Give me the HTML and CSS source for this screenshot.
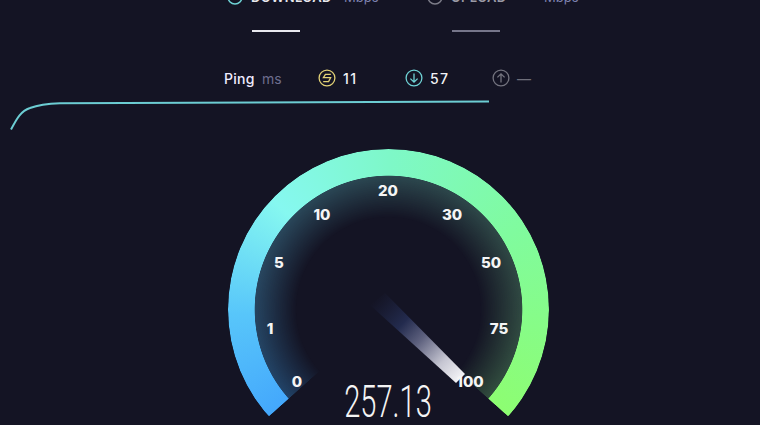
FILE: index.html
```html
<!DOCTYPE html>
<html lang="en">
<head>
<meta charset="utf-8">
<title>Speed test</title>
<link rel="stylesheet" href="styles.css">
</head>
<body>
<main class="page">
  <section class="heads">
    <div class="head head-down">
      <div class="head-label">
        <svg class="head-icon" viewBox="0 0 16 16"><circle cx="8" cy="8" r="7" fill="none" stroke="#6fd3d6" stroke-width="1.5"/></svg>
        <span class="head-name">DOWNLOAD</span><span class="head-unit">Mbps</span>
      </div>
      <div class="head-bar bar-on"></div>
    </div>
    <div class="head head-up">
      <div class="head-label">
        <svg class="head-icon" viewBox="0 0 16 16"><circle cx="8" cy="8" r="7" fill="none" stroke="#7c7c88" stroke-width="1.5"/></svg>
        <span class="head-name dim">UPLOAD</span><span class="head-unit">Mbps</span>
      </div>
      <div class="head-bar bar-off"></div>
    </div>
  </section>

  <section class="ping">
    <span class="ping-name">Ping</span><span class="ping-unit">ms</span>
    <svg class="ping-icon first" viewBox="0 0 18 18"><circle cx="9" cy="9" r="7.900" fill="none" stroke="#e3d276" stroke-width="1.300"/><path d="M12.800 5.400H7.400L5.400 8.700H12.600L10.600 12.600H5.200" fill="none" stroke="#e3d276" stroke-width="1.300"/></svg>
    <span class="ping-val">11</span>
    <svg class="ping-icon second" viewBox="0 0 18 18"><circle cx="9" cy="9" r="7.900" fill="none" stroke="#6fd3d6" stroke-width="1.300"/><path d="M9 4.400V13.200M5.400 9.600L9 13.200L12.600 9.600" fill="none" stroke="#6fd3d6" stroke-width="1.300"/></svg>
    <span class="ping-val">57</span>
    <svg class="ping-icon third" viewBox="0 0 18 18"><circle cx="9" cy="9" r="7.900" fill="none" stroke="#74747f" stroke-width="1.300"/><path d="M9 13.600V4.800M5.400 8.400L9 4.800L12.600 8.400" fill="none" stroke="#74747f" stroke-width="1.300"/></svg>
    <span class="ping-dash">—</span>
  </section>

  <svg class="graph" viewBox="0 0 490 32"><path d="M11 29.500C17 18 21 11 30 8C38 5 45 3.800 60 3.200C120 2.200 300 1.800 489 1.500" fill="none" stroke="#6ccdd3" stroke-width="2"/></svg>

  <section class="gauge">
    <div class="glow"></div>
    <div class="arc"></div>
    <svg class="needle" viewBox="365 285 120 110">
      <defs><linearGradient id="ng" gradientUnits="userSpaceOnUse" x1="376" y1="298" x2="466" y2="382">
        <stop offset="0" stop-color="#1e2545" stop-opacity="0"/>
        <stop offset=".3" stop-color="#232b4e"/>
        <stop offset=".5" stop-color="#5f627f"/>
        <stop offset=".75" stop-color="#c6c6d2"/>
        <stop offset="1" stop-color="#ffffff"/>
      </linearGradient></defs>
      <path d="M385 293L465 374L456 383L370 305Z" fill="url(#ng)"/>
    </svg>
    <span class="tick t0">0</span>
    <span class="tick t1">1</span>
    <span class="tick t5">5</span>
    <span class="tick t10">10</span>
    <span class="tick t20">20</span>
    <span class="tick t30">30</span>
    <span class="tick t50">50</span>
    <span class="tick t75">75</span>
    <span class="tick t100">100</span>
    <span class="speed">257.13</span>
  </section>
</main>
</body>
</html>
```
FILE: styles.css
```css
html, body { margin: 0; padding: 0; }
body {
  background: #141424;
  width: 760px;
  height: 425px;
  overflow: hidden;
  font-family: Inter, "Noto Sans", sans-serif;
  color: #fff;
}
.page { display: flex; flex-direction: column; height: 425px; overflow: hidden; }

.heads { display: flex; margin-top: -11px; padding-left: 227px; gap: 0; }
.head { width: 200px; display: flex; flex-direction: column; }
.head-label { display: flex; align-items: center; height: 16px; white-space: nowrap; }
.head-icon { width: 16px; height: 16px; flex: none; margin-right: 8px; }
.head-name { font-size: 13px; font-weight: 600; letter-spacing: .4px; color: #e8e8ee; width: 93px; }
.head-name.dim { color: #9a9aa5; }
.head-unit { font-size: 13px; color: #7f82b0; }
.head-bar { width: 48px; height: 2px; margin: 25px 0 0 25px; }
.bar-on { background: #e8e8ee; }
.bar-off { background: #76768a; }

.ping { display: flex; align-items: center; height: 18px; margin-top: 37px; padding-left: 224px; }
.ping-name { font-size: 14px; font-weight: 500; letter-spacing: .3px; color: #f0ecff; width: 38px; }
.ping-unit { font-size: 14px; color: #6d6d8d; width: 21px; }
.ping-icon { width: 18px; height: 18px; flex: none; }
.ping-icon.first { margin-left: 35px; }
.ping-icon.second { margin-left: 42px; }
.ping-icon.third { margin-left: 42px; }
.ping-val { font-size: 14px; font-weight: 500; color: #f2f2f6; margin-left: 7px; width: 20px; letter-spacing: 1.400px; }
.ping-dash { font-size: 14px; color: #6f6f7a; margin-left: 7px; }

.graph { display: block; flex: none; width: 490px; height: 32px; margin-top: 13px; }

.gauge { position: relative; flex: none; width: 321px; height: 276px; margin: 16.500px 0 0 227.500px; }
.arc, .glow { position: absolute; left: 0; top: 0; width: 321px; height: 321px; border-radius: 50%; }
.arc {
  background: conic-gradient(from 228.400deg,
    #44a8fc 0deg, #58c6fa 40deg, #86f8f0 85deg, #7ef8c8 132deg, #80fb9e 190deg, #8dfd72 263.200deg,
    transparent 263.500deg, transparent 359.700deg, #44a8fc 360deg);
  -webkit-mask-image: radial-gradient(circle, transparent 133.500px, #000 134.200px);
  mask-image: radial-gradient(circle, transparent 133.500px, #000 134.200px);
}
.glow {
  background: conic-gradient(from 228.400deg,
    #22456b 0deg, #2a4a63 60deg, #2d4a52 132deg, #314b46 200deg, #33503f 263.200deg,
    transparent 263.500deg, transparent 359.700deg, #22456b 360deg);
  -webkit-mask-image: radial-gradient(circle, transparent 92px, #000 136px);
  mask-image: radial-gradient(circle, transparent 92px, #000 136px);
}
.needle { position: absolute; left: 137.500px; top: 136.500px; width: 120px; height: 110px; }
.tick { position: absolute; transform: translate(-50%, -50%); font-size: 15px; font-weight: 800; line-height: 1; color: #f5f5f5; }
.t0 { left: 69.500px; top: 232.500px; }
.t1 { left: 42.500px; top: 179.500px; }
.t5 { left: 51.500px; top: 113.500px; }
.t10 { left: 94.500px; top: 65.500px; }
.t20 { left: 160.500px; top: 41.500px; }
.t30 { left: 224.500px; top: 65.500px; }
.t50 { left: 263.500px; top: 113.500px; }
.t75 { left: 271.500px; top: 179.500px; }
.t100 { left: 242.500px; top: 232.500px; }
.speed {
  position: absolute;
  left: 160.500px;
  top: 231.500px;
  font-family: Roboto, "Liberation Sans", sans-serif;
  font-weight: 300;
  font-size: 44px;
  line-height: 1;
  color: #f4f4f4;
  transform: translateX(-50%) scaleX(.66);
  white-space: nowrap;
}
```
